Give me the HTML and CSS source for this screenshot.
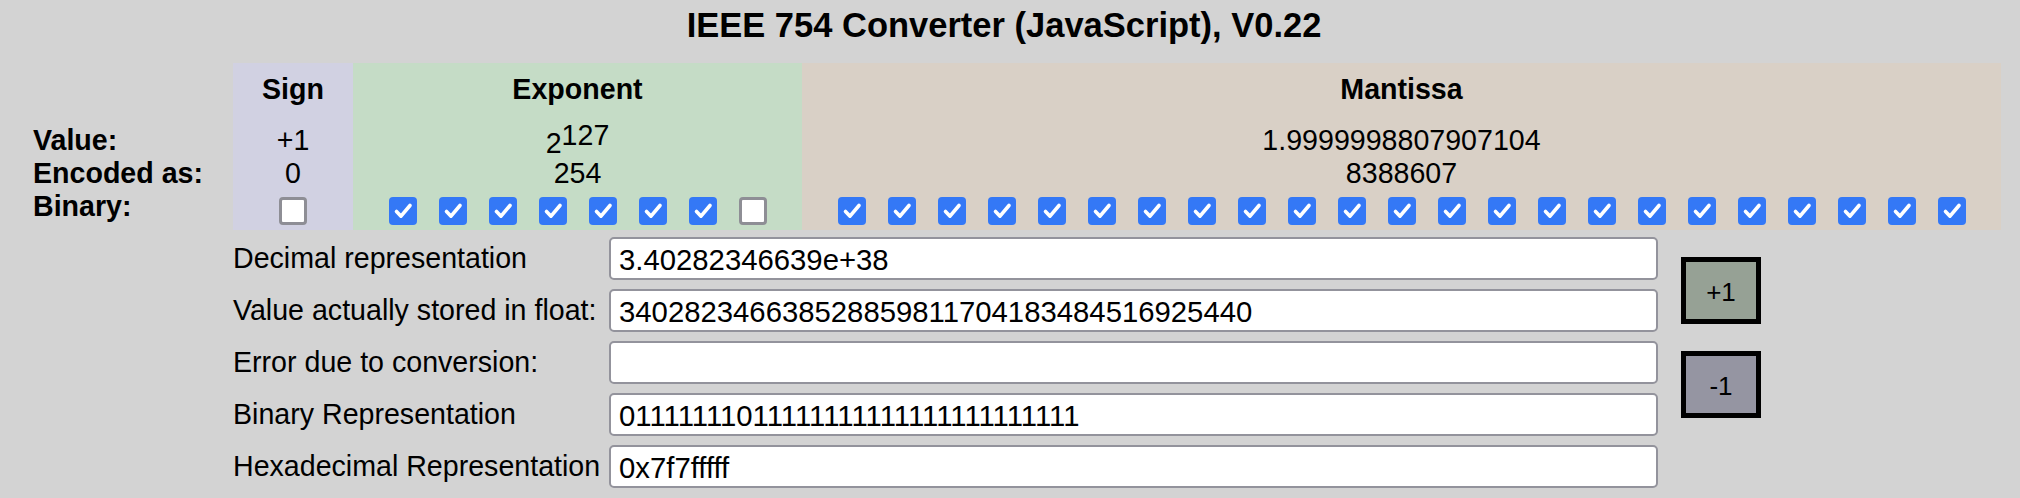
FILE: index.html
```html
<!DOCTYPE html>
<html>
<head>
<meta charset="utf-8">
<title>IEEE 754 Converter</title>
<link rel="stylesheet" href="styles.css">
</head>
<body>
<h1 class="title">IEEE 754 Converter (JavaScript), V0.22</h1>

<div class="bits">
  <div class="cell lbl"></div>
  <div class="cell sign head">Sign</div>
  <div class="cell exp head">Exponent</div>
  <div class="cell man head">Mantissa</div>

  <div class="cell lbl">Value:</div>
  <div class="cell sign">+1</div>
  <div class="cell exp exp-value">2<sup class="pow">127</sup></div>
  <div class="cell man">1.9999998807907104</div>

  <div class="cell lbl">Encoded as:</div>
  <div class="cell sign">0</div>
  <div class="cell exp">254</div>
  <div class="cell man">8388607</div>

  <div class="cell lbl">Binary:</div>
  <div class="cell sign boxes">
    <span class="cb"></span>
  </div>
  <div class="cell exp boxes">
    <span class="cb on"><svg viewBox="0 0 28 28"><path d="M7.5 14.5L12 19.2L21 8.5"/></svg></span>
    <span class="cb on"><svg viewBox="0 0 28 28"><path d="M7.5 14.5L12 19.2L21 8.5"/></svg></span>
    <span class="cb on"><svg viewBox="0 0 28 28"><path d="M7.5 14.5L12 19.2L21 8.5"/></svg></span>
    <span class="cb on"><svg viewBox="0 0 28 28"><path d="M7.5 14.5L12 19.2L21 8.5"/></svg></span>
    <span class="cb on"><svg viewBox="0 0 28 28"><path d="M7.5 14.5L12 19.2L21 8.5"/></svg></span>
    <span class="cb on"><svg viewBox="0 0 28 28"><path d="M7.5 14.5L12 19.2L21 8.5"/></svg></span>
    <span class="cb on"><svg viewBox="0 0 28 28"><path d="M7.5 14.5L12 19.2L21 8.5"/></svg></span>
    <span class="cb"></span>
  </div>
  <div class="cell man boxes">
    <span class="cb on"><svg viewBox="0 0 28 28"><path d="M7.5 14.5L12 19.2L21 8.5"/></svg></span>
    <span class="cb on"><svg viewBox="0 0 28 28"><path d="M7.5 14.5L12 19.2L21 8.5"/></svg></span>
    <span class="cb on"><svg viewBox="0 0 28 28"><path d="M7.5 14.5L12 19.2L21 8.5"/></svg></span>
    <span class="cb on"><svg viewBox="0 0 28 28"><path d="M7.5 14.5L12 19.2L21 8.5"/></svg></span>
    <span class="cb on"><svg viewBox="0 0 28 28"><path d="M7.5 14.5L12 19.2L21 8.5"/></svg></span>
    <span class="cb on"><svg viewBox="0 0 28 28"><path d="M7.5 14.5L12 19.2L21 8.5"/></svg></span>
    <span class="cb on"><svg viewBox="0 0 28 28"><path d="M7.5 14.5L12 19.2L21 8.5"/></svg></span>
    <span class="cb on"><svg viewBox="0 0 28 28"><path d="M7.5 14.5L12 19.2L21 8.5"/></svg></span>
    <span class="cb on"><svg viewBox="0 0 28 28"><path d="M7.5 14.5L12 19.2L21 8.5"/></svg></span>
    <span class="cb on"><svg viewBox="0 0 28 28"><path d="M7.5 14.5L12 19.2L21 8.5"/></svg></span>
    <span class="cb on"><svg viewBox="0 0 28 28"><path d="M7.5 14.5L12 19.2L21 8.5"/></svg></span>
    <span class="cb on"><svg viewBox="0 0 28 28"><path d="M7.5 14.5L12 19.2L21 8.5"/></svg></span>
    <span class="cb on"><svg viewBox="0 0 28 28"><path d="M7.5 14.5L12 19.2L21 8.5"/></svg></span>
    <span class="cb on"><svg viewBox="0 0 28 28"><path d="M7.5 14.5L12 19.2L21 8.5"/></svg></span>
    <span class="cb on"><svg viewBox="0 0 28 28"><path d="M7.5 14.5L12 19.2L21 8.5"/></svg></span>
    <span class="cb on"><svg viewBox="0 0 28 28"><path d="M7.5 14.5L12 19.2L21 8.5"/></svg></span>
    <span class="cb on"><svg viewBox="0 0 28 28"><path d="M7.5 14.5L12 19.2L21 8.5"/></svg></span>
    <span class="cb on"><svg viewBox="0 0 28 28"><path d="M7.5 14.5L12 19.2L21 8.5"/></svg></span>
    <span class="cb on"><svg viewBox="0 0 28 28"><path d="M7.5 14.5L12 19.2L21 8.5"/></svg></span>
    <span class="cb on"><svg viewBox="0 0 28 28"><path d="M7.5 14.5L12 19.2L21 8.5"/></svg></span>
    <span class="cb on"><svg viewBox="0 0 28 28"><path d="M7.5 14.5L12 19.2L21 8.5"/></svg></span>
    <span class="cb on"><svg viewBox="0 0 28 28"><path d="M7.5 14.5L12 19.2L21 8.5"/></svg></span>
    <span class="cb on"><svg viewBox="0 0 28 28"><path d="M7.5 14.5L12 19.2L21 8.5"/></svg></span>
  </div>
</div>

<div class="reps">
  <div class="rlabel">Decimal representation</div>
  <input class="field" type="text" value="3.40282346639e+38">
  <div class="buttons">
    <button class="step plus">+1</button>
    <button class="step minus">-1</button>
  </div>

  <div class="rlabel">Value actually stored in float:</div>
  <input class="field" type="text" value="340282346638528859811704183484516925440">

  <div class="rlabel">Error due to conversion:</div>
  <input class="field" type="text" value="">

  <div class="rlabel">Binary Representation</div>
  <input class="field" type="text" value="01111111011111111111111111111111">

  <div class="rlabel">Hexadecimal Representation</div>
  <input class="field" type="text" value="0x7f7fffff">
</div>
</body>
</html>
```

FILE: styles.css
```css
html, body {
  margin: 0;
  padding: 0;
}

body {
  background: #d3d3d3;
  color: #000;
  font-family: "Liberation Sans", Arial, Helvetica, sans-serif;
  font-size: 28.6px;
  width: 2020px;
  height: 498px;
  overflow: hidden;
}

.title {
  width: 2008px;
  margin: 0;
  padding-top: 5px;
  font-size: 34.5px;
  line-height: 40px;
  font-weight: bold;
  text-align: center;
}

.bits {
  display: grid;
  grid-template-columns: 233px 120px 449px 1199px;
  grid-template-rows: 61px 33px 33px 40px;
  margin-top: 18px;
  width: 2001px;
  line-height: 33px;
}

.cell {
  text-align: center;
  white-space: nowrap;
}

.lbl {
  text-align: left;
  padding-left: 33px;
  font-weight: bold;
}

.head {
  font-weight: bold;
  padding-top: 10px;
}

.sign { background: #d1d1e2; }
.exp  { background: #c5dcc6; }
.man  { background: #d9d0c6; }

.exp-value {
  padding-top: 3px;
}

.pow {
  font-size: inherit;
  vertical-align: 8px;
  line-height: 0;
}

.boxes {
  display: flex;
  justify-content: center;
  align-items: flex-start;
  gap: 22px;
  padding-top: 7px;
}

.cb {
  box-sizing: border-box;
  width: 28px;
  height: 28px;
  border-radius: 4px;
  background: #fff;
  border: 3px solid #8e8e95;
  display: block;
  flex: none;
}

.cb.on {
  background: #3478f6;
  border: none;
}

.cb svg {
  display: block;
  width: 28px;
  height: 28px;
}

.cb path {
  fill: none;
  stroke: #fff;
  stroke-width: 3.6;
  stroke-linecap: round;
  stroke-linejoin: round;
}

.reps {
  display: grid;
  grid-template-columns: 376px 1049px auto;
  grid-auto-rows: 43px;
  row-gap: 9px;
  margin-top: 7px;
  margin-left: 233px;
}

.rlabel {
  grid-column: 1;
  align-self: center;
  line-height: 33px;
  white-space: nowrap;
}

.field {
  grid-column: 2;
  box-sizing: border-box;
  width: 1049px;
  height: 43px;
  margin: 0;
  border: 2px solid #93939c;
  border-radius: 5px;
  background: #fff;
  padding: 2px 8px 0 8px;
  font-family: "Liberation Sans", Arial, Helvetica, sans-serif;
  font-size: 29.3px;
  color: #000;
  outline: none;
}

.buttons {
  grid-column: 3;
  grid-row: 1 / span 5;
  display: flex;
  flex-direction: column;
  align-items: flex-start;
  gap: 27px;
  padding-top: 20px;
  padding-left: 23px;
}

.step {
  box-sizing: border-box;
  width: 80px;
  height: 67px;
  margin: 0;
  padding: 3px 0 0 0;
  border: 5px solid #000;
  border-radius: 0;
  font-family: "Liberation Sans", Arial, sans-serif;
  font-size: 26px;
  line-height: 1;
  color: #000;
}

.plus  { background: #96a195; }
.minus { background: #9595a2; }
```
